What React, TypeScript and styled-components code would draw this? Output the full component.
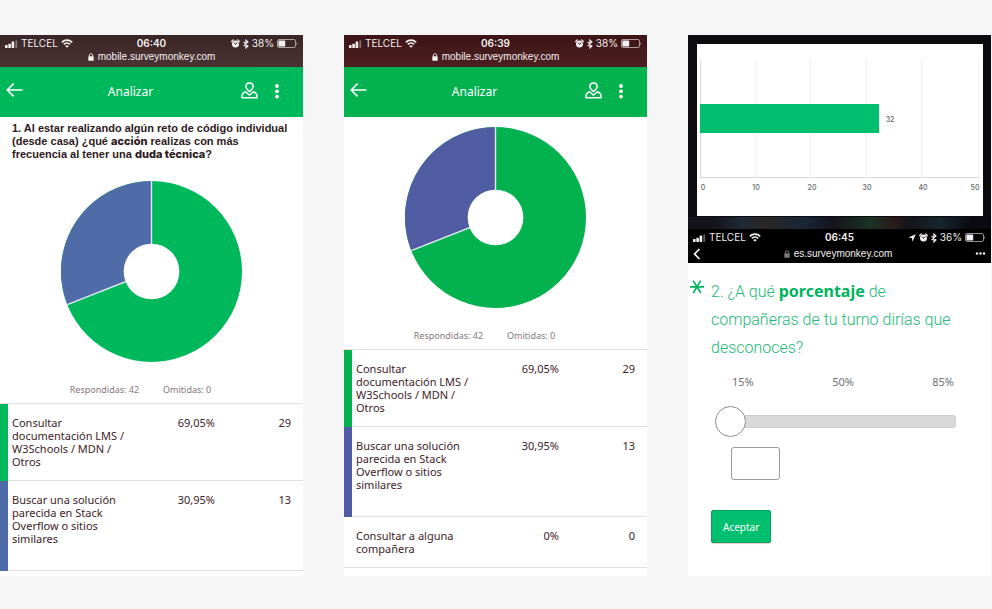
import React, { useState } from "react";
import styled, { createGlobalStyle } from "styled-components";

const GlobalStyle = createGlobalStyle`
  *, *::before, *::after { box-sizing: border-box; }
  body {
    margin: 0;
    background: #f6f6f6;
    font-family: "Noto Sans", "Open Sans", sans-serif;
    color: #3d2327;
  }
  button { font: inherit; border: 0; padding: 0; background: none; color: inherit; cursor: pointer; }
  svg { display: block; }
`;

const Page = styled.main`
  display: grid;
  grid-template-columns: repeat(3, minmax(0, 1fr));
  column-gap: 41px;
  padding: 35px 1px 33px 0;
`;

const Screen = styled.section`
  display: flex;
  flex-direction: column;
  background: #fff;
`;

/* ---------- phone status bar ---------- */

const StatusBar = styled.header<{ $bg: string; $tall?: boolean }>`
  padding: 2px 5px ${(p) => (p.$tall ? 0 : 4)}px;
  background: ${(p) => p.$bg};
  color: #f4f0f0;
  font-family: Inter, "Liberation Sans", sans-serif;
  font-size: 10px;
  line-height: 13px;
`;

const StatusRow = styled.div`
  display: grid;
  grid-template-columns: 1fr auto 1fr;
  align-items: center;
`;

const StatusGroup = styled.div<{ $end?: boolean }>`
  display: flex;
  align-items: center;
  justify-content: ${(p) => (p.$end ? "flex-end" : "flex-start")};
  gap: 3px;
`;

const Clock = styled.time`
  font-weight: 600;
`;

const AddressRow = styled.div<{ $tall?: boolean }>`
  display: flex;
  align-items: center;
  justify-content: space-between;
  height: ${(p) => (p.$tall ? 19 : 13)}px;
`;

const Address = styled.div`
  flex: 1;
  display: flex;
  align-items: center;
  justify-content: center;
  gap: 4px;
  font-family: "Liberation Sans", sans-serif;
`;

const SignalIcon = () => (
  <svg width="13" height="8" viewBox="0 0 13 8" fill="currentColor" aria-hidden="true">
    <rect x="0" y="5" width="2.6" height="3" rx="0.6" />
    <rect x="3.3" y="3.8" width="2.6" height="4.2" rx="0.6" />
    <rect x="6.6" y="1.6" width="2.6" height="6.4" rx="0.6" />
    <rect x="10.4" y="0.2" width="1.8" height="7.8" rx="0.6" opacity="0.4" />
  </svg>
);

const WifiIcon = () => (
  <svg width="12" height="9" viewBox="0 0 12 9" fill="none" stroke="currentColor" aria-hidden="true">
    <path d="M0.8 3.4C3.7 0.4 8.3 0.4 11.2 3.4" strokeWidth="1.6" />
    <path d="M2.8 5.4C4.6 3.6 7.4 3.6 9.2 5.4" strokeWidth="1.5" />
    <path d="M6 8.8L4.2 6.9C5.2 6 6.8 6 7.8 6.9Z" fill="currentColor" stroke="none" />
  </svg>
);

const AlarmIcon = () => (
  <svg width="9" height="9" viewBox="0 0 9 9" aria-hidden="true">
    <circle cx="4.5" cy="4.9" r="3.5" fill="currentColor" />
    <path d="M0.7 2.5L2.3 0.9M8.3 2.5L6.7 0.9" stroke="currentColor" strokeWidth="1.3" strokeLinecap="round" />
    <path d="M2.9 3.6L4.5 5.2L6.4 3.7" fill="none" stroke="#2a1a1c" strokeWidth="1" />
  </svg>
);

const BluetoothIcon = () => (
  <svg width="6" height="10" viewBox="0 0 6 10" fill="none" stroke="currentColor" strokeWidth="1.1" aria-hidden="true">
    <path d="M0.6 2.8L5 7L2.9 9V1L5 3L0.6 7.2" />
  </svg>
);

const LocationIcon = () => (
  <svg width="8" height="8" viewBox="0 0 8 8" fill="currentColor" aria-hidden="true">
    <path d="M7.8 0.2L4.4 7.8L3.9 4.1L0.2 3.6Z" />
  </svg>
);

const BatteryIcon = () => (
  <svg width="21" height="9" viewBox="0 0 21 9" aria-hidden="true">
    <rect x="0.5" y="0.5" width="18" height="8" rx="1.6" fill="none" stroke="currentColor" strokeOpacity="0.6" />
    <rect x="1.4" y="1.4" width="6.8" height="6.2" rx="0.6" fill="currentColor" />
    <path d="M19.4 3.2C20.6 3.6 20.6 5.4 19.4 5.8Z" fill="currentColor" opacity="0.7" />
  </svg>
);

const LockIcon = () => (
  <svg width="6" height="8" viewBox="0 0 6 8" aria-hidden="true">
    <rect x="0.3" y="3.2" width="5.4" height="4.6" rx="0.6" fill="currentColor" />
    <path d="M1.4 3.4V2.2C1.4 0.2 4.6 0.2 4.6 2.2V3.4" fill="none" stroke="currentColor" strokeWidth="1" />
  </svg>
);

const LockWrap = styled.span<{ $dim?: boolean }>`
  opacity: ${(p) => (p.$dim ? 0.5 : 1)};
`;

interface PhoneStatusProps {
  bg: string;
  time: string;
  battery: string;
  address: string;
  browser?: boolean;
}

const PhoneStatus = ({ bg, time, battery, address, browser }: PhoneStatusProps) => (
  <StatusBar $bg={bg} $tall={browser}>
    <StatusRow>
      <StatusGroup>
        <SignalIcon />
        <span>TELCEL</span>
        <WifiIcon />
      </StatusGroup>
      <Clock>{time}</Clock>
      <StatusGroup $end>
        {browser && <LocationIcon />}
        <AlarmIcon />
        <BluetoothIcon />
        <span>{battery}</span>
        <BatteryIcon />
      </StatusGroup>
    </StatusRow>
    <AddressRow $tall={browser}>
      {browser && (
        <button type="button" aria-label="Atrás">
          <svg width="8" height="12" viewBox="0 0 8 12" fill="none" stroke="currentColor" strokeWidth="1.8">
            <path d="M6.4 1L1.6 6L6.4 11" />
          </svg>
        </button>
      )}
      <Address>
        <LockWrap $dim={browser}>
          <LockIcon />
        </LockWrap>
        <span>{address}</span>
      </Address>
      {browser && (
        <button type="button" aria-label="Más opciones">
          <svg width="11" height="3" viewBox="0 0 11 3" fill="currentColor">
            <circle cx="2" cy="1.5" r="1.2" />
            <circle cx="5.5" cy="1.5" r="1.2" />
            <circle cx="9" cy="1.5" r="1.2" />
          </svg>
        </button>
      )}
    </AddressRow>
  </StatusBar>
);

/* ---------- analysis screens ---------- */

const AppBar = styled.nav<{ $bg: string }>`
  display: flex;
  align-items: center;
  height: 50px;
  padding: 0 23px 0 6px;
  background: ${(p) => p.$bg};
  color: #fff;
`;

const AppTitle = styled.h1`
  flex: 1;
  margin: 0;
  padding-right: 3px;
  font-size: 12px;
  font-weight: 400;
  line-height: 16px;
  text-align: center;
`;

const Actions = styled.div`
  display: flex;
  align-items: center;
  gap: 16px;
`;

const Prompt = styled.h2`
  margin: 0;
  padding: 5px 12px 0;
  font-family: "Liberation Sans", sans-serif;
  font-size: 11px;
  font-weight: 700;
  line-height: 13px;
  color: #2e1a1d;

  strong { font-family: Inter, "Liberation Sans", sans-serif; font-weight: 800; }
`;

const ChartArea = styled.div<{ $top: number }>`
  display: flex;
  justify-content: center;
  padding-top: ${(p) => p.$top}px;
`;

const Totals = styled.div`
  display: flex;
  justify-content: center;
  gap: 24px;
  padding: 21px 22px 6px 0;
  font-size: 9px;
  line-height: 14px;
  color: #85777a;
`;

const Results = styled.table`
  width: 100%;
  table-layout: fixed;
  border-collapse: separate;
  border-spacing: 0;
  border-top: 1px solid #e2dede;
  font-size: 11px;
  line-height: 13px;
`;

const SwatchCol = styled.col`
  width: 8px;
`;

const LabelCol = styled.col`
  width: 119px;
`;

const Swatch = styled.td<{ $color?: string }>`
  padding: 0;
  background: ${(p) => p.$color ?? "transparent"};
  border-bottom: ${(p) => (p.$color ? "0" : "1px solid #e2dede")};
`;

const Label = styled.th<{ $roomy?: boolean }>`
  padding: 12px 0 ${(p) => (p.$roomy ? 25 : 12)}px 4px;
  border-bottom: 1px solid #e2dede;
  font-weight: 400;
  text-align: left;
  vertical-align: top;
`;

const Value = styled.td<{ $last?: boolean }>`
  padding: 12px ${(p) => (p.$last ? 12 : 0)}px 12px 0;
  border-bottom: 1px solid #e2dede;
  text-align: right;
  vertical-align: top;
`;

const Donut = ({ green, blue, share }: { green: string; blue: string; share: number }) => {
  const c = 91;
  const angle = share * Math.PI * 2;
  const px = (r: number) => c + r * Math.sin(angle);
  const py = (r: number) => c - r * Math.cos(angle);
  return (
    <svg width="181" height="181" viewBox="0 0 182 182" role="img" aria-label="Respuestas">
      <circle cx={c} cy={c} r="91" fill={green} />
      <path d={`M${c} ${c}L${px(91)} ${py(91)}A91 91 0 0 1 ${c} 0Z`} fill={blue} />
      <path d={`M${c} 0V${c}L${px(91)} ${py(91)}`} fill="none" stroke="#e4eaf2" strokeWidth="1.4" />
      <circle cx={c} cy={c} r="28" fill="#fff" />
    </svg>
  );
};

interface Answer {
  label: string;
  percent: string;
  count: number;
  color?: string;
  roomy?: boolean;
}

interface AnalysisProps {
  time: string;
  statusBg: string;
  green: string;
  blue: string;
  chartTop: number;
  answers: Answer[];
  children?: React.ReactNode;
}

const Analysis = ({ time, statusBg, green, blue, chartTop, answers, children }: AnalysisProps) => (
  <Screen>
    <PhoneStatus bg={statusBg} time={time} battery="38%" address="mobile.surveymonkey.com" />
    <AppBar $bg={green}>
      <button type="button" aria-label="Volver">
        <svg width="17" height="18" viewBox="0 0 17 18" fill="none" stroke="currentColor" strokeWidth="1.6">
          <path d="M16.5 7H1.5M7.6 0.6L1.2 7L7.6 13.4" />
        </svg>
      </button>
      <AppTitle>Analizar</AppTitle>
      <Actions>
        <button type="button" aria-label="Cuenta">
          <svg width="17" height="20" viewBox="0 0 17 20" fill="none" stroke="currentColor" strokeWidth="1.5" strokeLinejoin="round">
            <path d="M8.5 0.9C6.3 0.9 4.9 2.4 4.9 4.6C4.9 6.2 6 7.6 8.5 9.6C11 7.6 12.1 6.2 12.1 4.6C12.1 2.4 10.7 0.9 8.5 0.9Z" />
            <path d="M4.9 9.8C2.4 10.6 1 12 1 14V15.7H16V14C16 12 14.6 10.6 12.1 9.8" />
            <path d="M4.7 9.8L8.5 13.2L12.3 9.8" />
          </svg>
        </button>
        <button type="button" aria-label="Menú">
          <svg width="6" height="16" viewBox="0 0 6 16" fill="currentColor">
            <circle cx="3" cy="2" r="1.9" />
            <circle cx="3" cy="7.3" r="1.9" />
            <circle cx="3" cy="12.6" r="1.9" />
          </svg>
        </button>
      </Actions>
    </AppBar>
    {children}
    <ChartArea $top={chartTop}>
      <Donut green={green} blue={blue} share={0.6905} />
    </ChartArea>
    <Totals>
      <span>Respondidas: 42</span>
      <span>Omitidas: 0</span>
    </Totals>
    <Results>
      <colgroup>
        <SwatchCol />
        <LabelCol />
        <col />
        <col />
      </colgroup>
      <tbody>
        {answers.map((a) => (
          <tr key={a.label}>
            <Swatch $color={a.color} />
            <Label scope="row" $roomy={a.roomy}>{a.label}</Label>
            <Value>{a.percent}</Value>
            <Value $last>{a.count}</Value>
          </tr>
        ))}
      </tbody>
    </Results>
  </Screen>
);

/* ---------- survey screen ---------- */

const ChartFrame = styled.div`
  padding: 9px 8px 13px 9px;
  background:
    linear-gradient(90deg, #14131a 8%, #1d2a35 18%, #2a2624 25%, #172638 39%, #14141c 48%, #1b3324 60%, #2a1a1a 68%, #14141a 73%, #14262c 83%, #0a0a10 94%) bottom / 100% 12px no-repeat,
    #0b0b10;
`;

const ChartCard = styled.div`
  background: #fff;

  svg { width: 100%; height: auto; }
  text { font-family: Inter, "Liberation Sans", sans-serif; font-size: 7px; font-weight: 500; fill: #5f666b; }
`;

const BarChart = () => {
  const ticks = [
    { x: 4, label: "0", tx: 6 },
    { x: 59, label: "10", tx: 59 },
    { x: 114, label: "20", tx: 115 },
    { x: 170, label: "30", tx: 170 },
    { x: 225, label: "40", tx: 226 },
    { x: 282, label: "50", tx: 278 },
  ];
  return (
    <svg viewBox="0 0 286 172" role="img" aria-label="Promedio: 32">
      {ticks.map((t) => (
        <g key={t.label}>
          <rect x={t.x - 1} y="16" width="1" height="117" fill={t.x === 4 ? "#dcdcdc" : "#f0f0f0"} />
          <text x={t.tx} y="146" textAnchor="middle">{t.label}</text>
        </g>
      ))}
      <rect x="3" y="133" width="279" height="1" fill="#d8d8d8" />
      <rect x="3" y="60" width="179" height="29" fill="#00bf6f" />
      <text x="193" y="78" textAnchor="middle">32</text>
    </svg>
  );
};

const Survey = styled.form`
  display: flex;
  flex-direction: column;
  align-items: flex-start;
  padding: 14px 23px 33px 2px;
`;

const QuestionRow = styled.div`
  display: flex;
  align-items: flex-start;
  gap: 7px;
  padding-right: 12px;
`;

const Required = styled.span`
  flex: none;
  padding-top: 3px;
`;

const Question = styled.h2`
  margin: 0;
  font-family: Roboto, "Open Sans", sans-serif;
  font-size: 16px;
  font-weight: 300;
  line-height: 28px;
  color: #23b876;

  strong { font-family: "Noto Sans", sans-serif; font-weight: 700; color: #00b35f; }
`;

const Scale = styled.div`
  align-self: stretch;
  display: flex;
  justify-content: space-between;
  margin: 13px 14px 0 42px;
  font-size: 11px;
  line-height: 14px;
  color: #6e7276;
`;

const Slider = styled.input`
  align-self: stretch;
  appearance: none;
  height: 31px;
  margin: 17px 12px 0 25px;
  background: transparent;

  &::-webkit-slider-runnable-track {
    height: 13px;
    border: 1px solid #cbcbcb;
    border-left: 0;
    border-radius: 7px 4px 4px 7px;
    background: #d9d9d9;
  }
  &::-webkit-slider-thumb {
    appearance: none;
    width: 31px;
    height: 31px;
    margin-top: -10px;
    border: 1px solid #8f8f8f;
    border-radius: 50%;
    background: #fff;
  }
`;

const Amount = styled.input`
  width: 49px;
  height: 33px;
  margin: 10px 0 0 41px;
  border: 1px solid #999;
  border-radius: 3px;
  background: #fff;
  font: inherit;
  font-size: 12px;
  text-align: center;
`;

const Submit = styled.button`
  && {
    height: 33px;
    margin: 30px 0 0 21px;
    padding: 0 11px;
    border: 1px solid #0a9f5c;
    border-radius: 2px;
    background: #00bf6f;
    box-shadow: 0 1px 1px #e3cdd2;
    color: #fff;
    font-size: 10px;
    line-height: 14px;
  }
`;

const SurveyScreen = () => {
  const [slide, setSlide] = useState(0);
  const [amount, setAmount] = useState("");
  return (
    <Screen>
      <ChartFrame>
        <ChartCard>
          <BarChart />
        </ChartCard>
      </ChartFrame>
      <PhoneStatus bg="#000" time="06:45" battery="36%" address="es.surveymonkey.com" browser />
      <Survey onSubmit={(e) => e.preventDefault()}>
        <QuestionRow>
          <Required>
            <svg width="14" height="14" viewBox="0 0 14 14" fill="none" stroke="#00b35f" strokeWidth="1.7" role="img" aria-label="Obligatoria">
              <path d="M0 6.8H14M3.2 0.6L10.8 13M10.8 0.6L3.2 13" />
            </svg>
          </Required>
          <Question id="question">
            2. ¿A qué <strong>porcentaje</strong> de compañeras de tu turno dirías que desconoces?
          </Question>
        </QuestionRow>
        <Scale>
          <span>15%</span>
          <span>50%</span>
          <span>85%</span>
        </Scale>
        <Slider
          type="range"
          min={0}
          max={100}
          value={slide}
          aria-labelledby="question"
          onChange={(e) => {
            setSlide(Number(e.target.value));
            setAmount(e.target.value);
          }}
        />
        <Amount
          type="text"
          value={amount}
          aria-labelledby="question"
          onChange={(e) => setAmount(e.target.value)}
        />
        <Submit type="submit">Aceptar</Submit>
      </Survey>
    </Screen>
  );
};

const answersFor = (green: string, blue: string): Answer[] => [
  { label: "Consultar documentación LMS / W3Schools / MDN / Otros", percent: "69,05%", count: 29, color: green },
  { label: "Buscar una solución parecida en Stack Overflow o sitios similares", percent: "30,95%", count: 13, color: blue, roomy: true },
];

export default function App() {
  return (
    <>
      <GlobalStyle />
      <Page>
        <Analysis
          time="06:40"
          statusBg="linear-gradient(#3a2526, #4b3433)"
          green="#00b85c"
          blue="#4f6ca9"
          chartTop={20}
          answers={answersFor("#00b85c", "#4f6ca9")}
        >
          <Prompt>
            1. Al estar realizando algún reto de código individual (desde casa) ¿qué <strong>acción</strong> realizas con
            más frecuencia al tener una <strong>duda técnica</strong>?
          </Prompt>
        </Analysis>
        <Analysis
          time="06:39"
          statusBg="linear-gradient(#3d1517, #4d2021)"
          green="#03b14f"
          blue="#505da3"
          chartTop={10}
          answers={[
            ...answersFor("#03b14f", "#505da3"),
            { label: "Consultar a alguna compañera", percent: "0%", count: 0 },
          ]}
        />
        <SurveyScreen />
      </Page>
    </>
  );
}
